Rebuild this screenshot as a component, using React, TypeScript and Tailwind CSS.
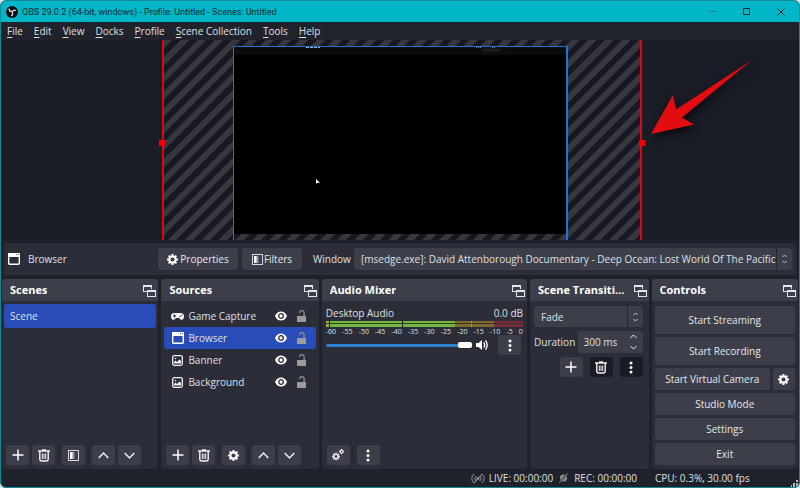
import type { ReactNode } from "react";

const btn = "flex items-center justify-center rounded-[3px] bg-[#3c3e49] text-[#e6e7ea]";

function Float() {
  return (
    <svg width="13" height="13" viewBox="0 0 13 13" fill="none" stroke="#e6e7ea" shapeRendering="crispEdges">
      <path d="M4 7.500H.5V1.500h8v3" />
      <path d="M0 2h9" strokeWidth="2" />
      <path d="M4.500 6.500h8v6h-8z" />
      <path d="M4 7h9" strokeWidth="2" />
    </svg>
  );
}
function Plus() {
  return <svg width="12" height="12" viewBox="0 0 12 12" stroke="#fff" strokeWidth="1.5"><path d="M6 .5v11M.5 6h11" /></svg>;
}
function Trash() {
  return (
    <svg width="12" height="13" viewBox="0 0 12 13" fill="none" stroke="#f2f2f4" strokeWidth="1.4">
      <path d="M0 2h12M4 1h4M1.8 2.5v7.5q0 2 2 2h4.4q2 0 2-2V2.500" />
      <path d="M4.300 4.500v5.500M6 4.500v5.500M7.700 4.500v5.500" strokeWidth="1" />
    </svg>
  );
}
function Chevron({ down = false, size = 11 }: { down?: boolean; size?: number }) {
  return (
    <svg width={size} height={size} viewBox="0 0 11 11" fill="none" stroke="#f2f2f4" strokeWidth="1.5">
      <path d={down ? "M.7 3 5.500 8l4.800-5" : "M.7 8 5.500 3l4.800 5"} />
    </svg>
  );
}
function UpDown() {
  return (
    <svg width="5" height="10" viewBox="0 0 5 10" fill="none" stroke="#c4c6cc" strokeWidth="1">
      <path d="M.5 3 2.500 1l2 2M.5 7l2 2 2-2" />
    </svg>
  );
}
function Dots() {
  return <svg width="4" height="13" viewBox="0 0 4 13" fill="#fff"><circle cx="2" cy="2" r="1.500" /><circle cx="2" cy="6.500" r="1.500" /><circle cx="2" cy="11" r="1.500" /></svg>;
}
function Gear({ size = 11 }: { size?: number }) {
  return (
    <svg width={size} height={size} viewBox="0 0 12 12" fill="none" stroke="#fff">
      <circle cx="6" cy="6" r="3.500" strokeWidth="2.400" />
      <path d="M6 0v2M6 10v2M0 6h2M10 6h2M1.760 1.760l1.400 1.400M8.840 8.840l1.400 1.400M1.760 10.240l1.400-1.400M8.840 3.160l1.400-1.400" strokeWidth="2.200" />
    </svg>
  );
}
function Gears() {
  return (
    <svg width="12" height="12" viewBox="0 0 12 12" fill="none" stroke="#f2f2f4">
      <circle cx="4" cy="7.500" r="2.200" strokeWidth="1.500" />
      <path d="M4 3.500v1M4 10.500v1M0 7.500h1M7 7.500h1M1.200 4.700l.7.700M6.100 9.600l.7.700M1.200 10.300l.7-.7M6.100 5.400l.7-.7" strokeWidth="1.400" />
      <circle cx="9.600" cy="2.600" r="1.500" strokeWidth="1.300" />
      <path d="M9.600 0v1M9.600 4.200v1M7 2.600h1M11.200 2.600h.8" strokeWidth="1" />
    </svg>
  );
}
function Filter() {
  return (
    <svg width="11" height="11" viewBox="0 0 11 11" shapeRendering="crispEdges">
      <path d="M.5.5h10v10H.5z" fill="none" stroke="#d8d9dd" />
      <path d="M2 2h2v7H2z" fill="#fff" /><path d="M4 2h1v7H4z" fill="#c6c7cb" /><path d="M5 2h1v7H5z" fill="#94959c" /><path d="M6 2h1v7H6z" fill="#666872" />
    </svg>
  );
}
function WindowIcon() {
  return (
    <svg width="12" height="12" viewBox="0 0 12 12">
      <rect x=".7" y=".7" width="10.600" height="10.600" rx="1" fill="none" stroke="#fff" strokeWidth="1.400" />
      <path d="M0 1q0-1 1-1h10q1 0 1 1v3H0z" fill="#fff" />
      <path d="M8 1.500h1M10 1.500h1" stroke="#555b78" />
    </svg>
  );
}
function Gamepad() {
  return (
    <svg width="13" height="7" viewBox="0 0 13 7">
      <path d="M3.200 0h6.600A3.200 3.200 0 0 1 13 3.500C13 6 11.500 7 10.300 6.800 9 6.600 8.500 5 7.700 5H5.300C4.500 5 4 6.600 2.700 6.800 1.500 7 0 6 0 3.500A3.200 3.200 0 0 1 3.200 0z" fill="#f2f2f4" />
      <path d="M2 3h3M3.500 1.500v3M8.300 3.500h1.400M10 2.200h1.300" stroke="#2b2d38" />
    </svg>
  );
}
function Picture() {
  return (
    <svg width="11" height="11" viewBox="0 0 11 11">
      <rect x=".7" y=".7" width="9.600" height="9.600" rx="1.500" fill="none" stroke="#f2f2f4" strokeWidth="1.300" />
      <path d="M2 8.500V7l1.500-1.500L5 7l2.500-2.500L9 6v2.500z" fill="#f2f2f4" /><circle cx="3.500" cy="3.500" r=".8" fill="#f2f2f4" />
    </svg>
  );
}
function Eye() {
  return (
    <svg width="12" height="10" viewBox="0 0 12 10">
      <path d="M0 5C1.200 2 3.400.4 6 .4S10.800 2 12 5C10.800 8 8.600 9.600 6 9.600S1.200 8 0 5z" fill="#fff" />
      <circle cx="6" cy="5" r="2.300" fill="none" stroke="#2b2d38" strokeWidth="1.300" />
    </svg>
  );
}
function Unlock() {
  return (
    <svg width="9" height="12" viewBox="0 0 9 12">
      <path d="M0 6h9v6H0z" fill="#9b9b98" />
      <path d="M2.700 3V2.800A2.200 2.200 0 0 1 7.100 2.800V6" fill="none" stroke="#8b8c8d" strokeWidth="1.400" />
    </svg>
  );
}

function Dock({ title, label, children }: { title: string; label?: string; children: ReactNode }) {
  return (
    <section aria-label={label ?? title} className="flex min-w-0 flex-col overflow-hidden rounded-[3px] bg-[#2b2d38]">
      <header className="flex h-[22px] items-center justify-between bg-[#3c3e49] pr-[2px] pl-2">
        <h2 className="truncate text-[11px] font-bold text-white">{title}</h2>
        <button aria-label={`Float ${title}`}><Float /></button>
      </header>
      {children}
    </section>
  );
}
function Tool({ label, children, dark = false }: { label: string; children: ReactNode; dark?: boolean }) {
  return (
    <button aria-label={label} className={`flex h-5 w-[23px] shrink-0 items-center justify-center rounded-[3px] ${dark ? "bg-[#191b25]" : "bg-[#3c3e49]"}`}>
      {children}
    </button>
  );
}
function Divider() {
  return <span className="h-4 w-px bg-[#21232d]" />;
}

const menus = ["File", "Edit", "View", "Docks", "Profile", "Scene Collection", "Tools", "Help"];
const sources = [
  { name: "Game Capture", icon: <Gamepad />, on: false },
  { name: "Browser", icon: <WindowIcon />, on: true },
  { name: "Banner", icon: <Picture />, on: false },
  { name: "Background", icon: <Picture />, on: false },
];
const ticks = ["-60", "-55", "-50", "-45", "-40", "-35", "-30", "-25", "-20", "-15", "-10", "-5", "0"];

function TitleBar() {
  return (
    <header className="flex h-[21px] items-center bg-[#00b6c7] pl-[5px] text-[#08272c]">
      <svg width="12" height="12" viewBox="0 0 12 12">
        <circle cx="6" cy="6" r="6" fill="#0c0c10" />
        <g fill="none" stroke="#d9dadd" strokeWidth="1.300"><path d="M3 2.600Q3.200 5.500 6 5.600M9.800 4.600Q7.500 3.600 6 5.800M5.200 10Q7.500 8.500 6.200 6" /></g>
      </svg>
      <h1 className="ml-1 font-['Roboto'] text-[9px]">OBS 29.0.2 (64-bit, windows) - Profile: Untitled - Scenes: Untitled</h1>
      <div className="ml-auto flex">
        <button aria-label="Minimize" className="flex h-5 w-[34px] items-center justify-center"><svg width="7" height="7" viewBox="0 0 7 7" stroke="#11808c"><path d="M0 3.500h7" /></svg></button>
        <button aria-label="Maximize" className="flex h-5 w-[34px] items-center justify-center"><svg width="7" height="7" viewBox="0 0 7 7" fill="none" stroke="#08272c"><path d="M.5.5h6v6h-6z" /></svg></button>
        <button aria-label="Close" className="flex h-5 w-9 items-center justify-center"><svg width="8" height="8" viewBox="0 0 8 8" stroke="#08272c"><path d="m.5.5 7 7m0-7-7 7" /></svg></button>
      </div>
    </header>
  );
}

function Preview() {
  return (
    <main className="relative flex h-[200px] justify-center overflow-hidden bg-[#1a1c26]">
      <div className="relative ml-[3px] w-[480px] border-x-2 border-[#d80a10]">
        <svg className="absolute inset-0 h-full w-full">
          <defs>
            <pattern id="hatch" width="12" height="12" patternUnits="userSpaceOnUse" patternTransform="rotate(45)">
              <rect width="12" height="12" fill="#181822" />
              <rect width="6" height="12" fill="#37373f" />
            </pattern>
          </defs>
          <rect width="100%" height="100%" fill="url(#hatch)" />
        </svg>
        <span className="absolute top-[100px] -left-[5px] size-[6px] bg-[#f60005]" />
        <span className="absolute top-[100px] -right-[5px] size-[6px] bg-[#f60005]" />
        <div className="absolute top-[6px] left-[69px] h-[194px] w-[335px] border border-r-2 border-b-0 border-[#1c74d4]">
          <div className="h-[187px] border-t-8 border-[#0b0c0d] bg-black" />
          <svg className="absolute top-0 left-[72px]" width="200" height="5" viewBox="0 0 200 5" fill="none">
            <path d="M0 .5h14" stroke="#9fb4cc" strokeDasharray="3 1" />
            <path d="M170 .5h5M186 .5h4" stroke="#8294a8" strokeDasharray="1 1" />
            <path d="M176 3h18" stroke="#1b1c1f" strokeWidth="3" />
          </svg>
          <svg className="absolute top-[132px] left-[82px]" width="4" height="5" viewBox="0 0 4 5" fill="#fff"><path d="M0 0v5l1.300-1.200H4z" /></svg>
        </div>
      </div>
      <svg className="absolute top-[10px] right-[36px]" width="124" height="100" viewBox="0 0 124 100">
        <path d="M113 10 37 59.500 34 45 12 84 55 74.500 43 67.500Z" fill="#e30c10" style={{ filter: "drop-shadow(2px 4px 4px #0009)" }} />
      </svg>
    </main>
  );
}

export default function App() {
  return (
    <div className="bg-[#d8e4e4]">
      <div className="flex min-h-screen flex-col overflow-hidden rounded-[6px] border border-[#128a98] bg-[#1f212b] font-['Open_Sans','Noto_Sans',sans-serif] text-[10px] leading-4 text-[#dfe0e4]">
        <TitleBar />
        <nav className="flex h-[18px] items-center gap-[11px] bg-[#20222c] pl-[6px]">
          {menus.map((m) => (
            <button key={m}><u className="underline-offset-2">{m[0]}</u>{m.slice(1)}</button>
          ))}
        </nav>
        <Preview />
        <div className="mx-[3px] mt-[3px] flex h-8 items-center rounded-[3px] bg-[#2b2d38] px-1">
          <WindowIcon />
          <span className="ml-2 w-[130px]">Browser</span>
          <button className={`${btn} h-[22px] w-20 gap-0.5`}><Gear size={11} />Properties</button>
          <button className={`${btn} ml-1 h-[22px] w-[60px] gap-px`}><Filter />Filters</button>
          <label htmlFor="window" className="ml-[11px] w-9">Window</label>
          <div className="relative ml-[5px] flex h-[22px] min-w-0 flex-1 rounded-[3px] bg-[#3c3e49]">
            <select id="window" className="min-w-0 flex-1 appearance-none overflow-hidden pl-[7px] text-clip">
              <option>[msedge.exe]: David Attenborough Documentary - Deep Ocean: Lost World Of The Pacific Pa</option>
            </select>
            <span className="pointer-events-none flex w-4 items-center justify-center border-l border-[#23252f]"><UpDown /></span>
          </div>
        </div>
        <div className="mt-1 grid flex-1 grid-cols-[157fr_158fr_206fr_119fr_147fr] gap-[3px] px-px">
          <Dock title="Scenes">
            <ul className="flex-1 px-0.5 py-[3px]">
              <li><button className="h-6 w-full rounded-[3px] bg-[#284cb8] pl-1.5 text-left">Scene</button></li>
            </ul>
            <div className="flex items-center gap-[3px] px-1 pb-1">
              <Tool label="Add scene"><Plus /></Tool><Tool label="Remove scene"><Trash /></Tool><Divider />
              <Tool label="Scene filters"><Filter /></Tool><Divider />
              <Tool label="Move scene up"><Chevron /></Tool><Tool label="Move scene down"><Chevron down /></Tool>
            </div>
          </Dock>
          <Dock title="Sources">
            <ul className="flex-1 px-[3px] py-1">
              {sources.map((s) => (
                <li key={s.name} className={`flex h-[22px] items-center rounded-[3px] pr-[10px] pl-[7px] ${s.on ? "bg-[#284cb8]" : ""}`}>
                  <span className="flex w-[13px] justify-center">{s.icon}</span>
                  <span className="ml-1 flex-1">{s.name}</span>
                  <button aria-label={`Hide ${s.name}`}><Eye /></button>
                  <button aria-label={`Lock ${s.name}`} className="ml-[10px]"><Unlock /></button>
                </li>
              ))}
            </ul>
            <div className="flex items-center gap-[3px] px-[5px] pb-1">
              <Tool label="Add source"><Plus /></Tool><Tool label="Remove source"><Trash /></Tool><Divider />
              <Tool label="Source properties"><Gear /></Tool><Divider />
              <Tool label="Move source up"><Chevron /></Tool><Tool label="Move source down"><Chevron down /></Tool>
            </div>
          </Dock>
          <Dock title="Audio Mixer">
            <div className="flex-1 px-1 pt-1">
              <div className="flex justify-between"><label htmlFor="vol">Desktop Audio</label><span>0.0 dB</span></div>
              <svg className="h-[6px] w-full" viewBox="0 0 196 6" preserveAspectRatio="none" shapeRendering="crispEdges">
                <path d="M0 0h128v6H0z" fill="#74b93a" /><path d="M128 0h39v6h-39z" fill="#80692a" /><path d="M167 0h29v6h-29z" fill="#7c2a3a" />
                <path d="M0 0h2v6H0zM144 0h1v6h-1z" fill="#d0a020" /><path d="M3 0h1v6H3zM76 0h1v6h-1z" fill="#0c0d12" /><path d="M0 2h196v1H0z" fill="#2b3a2c" />
              </svg>
              <div className="flex h-2 justify-between text-[7px] leading-[9px]">{ticks.map((t) => <span key={t}>{t}</span>)}</div>
              <div className="flex items-center pr-[2px]">
                <span className="relative flex h-4 w-[146px] items-center">
                  <input id="vol" type="range" defaultValue={100} className="h-[3px] w-full appearance-none rounded bg-[#2f7fd2] [&::-webkit-slider-thumb]:h-[6px] [&::-webkit-slider-thumb]:w-[14px] [&::-webkit-slider-thumb]:appearance-none [&::-webkit-slider-thumb]:rounded-[2px] [&::-webkit-slider-thumb]:bg-white" />
                </span>
                <button aria-label="Mute" className="ml-1">
                  <svg width="13" height="12" viewBox="0 0 13 12"><path d="M0 4h2.500L6 1v10L2.500 8H0z" fill="#fff" /><path d="M7.700 3.500q2 2.500 0 5M9.500 1.500q3.500 4.500 0 9" fill="none" stroke="#fff" strokeWidth="1.300" /></svg>
                </button>
                <span className="ml-auto"><Tool label="Audio options"><Dots /></Tool></span>
              </div>
            </div>
            <div className="flex items-center gap-[3px] px-[5px] pb-1">
              <Tool label="Advanced audio"><Gears /></Tool><Divider /><Tool label="Mixer menu"><Dots /></Tool>
            </div>
          </Dock>
          <Dock title="Scene Transiti..." label="Scene Transitions">
            <div className="flex flex-col gap-1 py-[5px] pr-[6px] pl-1">
              <div className="flex h-[21px] rounded-[3px] bg-[#3c3e49]">
                <select aria-label="Transition" className="min-w-0 flex-1 appearance-none pl-[7px]"><option>Fade</option></select>
                <span className="pointer-events-none flex w-4 items-center justify-center border-l border-[#23252f]"><UpDown /></span>
              </div>
              <div className="flex h-[22px] items-center justify-between">
                <label htmlFor="duration">Duration</label>
                <div className="flex h-full w-[65px] items-center rounded-[3px] bg-[#3c3e49] pr-[6px] pl-[6px]">
                  <input id="duration" defaultValue="300 ms" className="w-full min-w-0" />
                  <span className="flex flex-col gap-1"><Chevron size={7} /><Chevron down size={7} /></span>
                </div>
              </div>
              <div className="flex justify-end gap-[7px]">
                <Tool label="Add transition"><Plus /></Tool><Tool label="Remove transition" dark><Trash /></Tool><Tool label="Transition options" dark><Dots /></Tool>
              </div>
            </div>
          </Dock>
          <Dock title="Controls">
            <div className="flex flex-col gap-[3px] p-[3px] pt-[5px]">
              <button className={`${btn} h-7`}>Start Streaming</button>
              <button className={`${btn} h-7`}>Start Recording</button>
              <div className="flex gap-[3px]"><button className={`${btn} h-[22px] flex-1`}>Start Virtual Camera</button><button aria-label="Virtual camera settings" className={`${btn} h-[22px] w-[22px]`}><Gear /></button></div>
              <button className={`${btn} h-[22px]`}>Studio Mode</button>
              <button className={`${btn} h-[22px]`}>Settings</button>
              <button className={`${btn} h-[22px]`}>Exit</button>
            </div>
          </Dock>
        </div>
        <footer className="flex h-[18px] items-center justify-end">
          <svg width="14" height="11" viewBox="0 0 14 11" fill="none" stroke="#9a9ca3"><path d="M3 1Q-1.500 5.500 3 10M5 3Q2.500 5.500 5 8M11 1q4.500 4.500 0 9M9 3q2.500 2.500 0 5M3 10 11 1" /><circle cx="7" cy="5.500" r="1" fill="#9a9ca3" /></svg>
          <span className="ml-1">LIVE: 00:00:00</span>
          <svg className="ml-[6px]" width="9" height="10" viewBox="0 0 9 10"><circle cx="4.500" cy="5" r="3.600" fill="#8e9097" /><path d="M0 10 9 0" stroke="#1f212b" strokeWidth="2" /><path d="M.5 9.500 8.500.5" stroke="#a6a8ae" /></svg>
          <span className="ml-[6px]">REC: 00:00:00</span>
          <span className="ml-[18px] w-[136px]">CPU: 0.3%, 30.00 fps</span>
          <svg className="mr-px self-end" width="7" height="7" viewBox="0 0 7 7" fill="#b8babf"><path d="M5 0h2v2H5zM2 3h2v2H2zM5 3h2v2H5zM0 5h1v2H0zM2 5h2v2H2zM5 5h2v2H5z" /></svg>
        </footer>
      </div>
    </div>
  );
}
